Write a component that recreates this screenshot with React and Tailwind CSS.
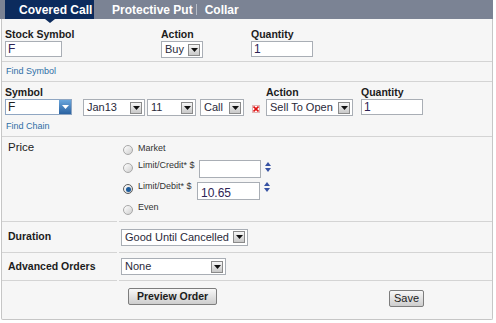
import React from 'react';

const Caret = ({ color = '#111' }) => (
  <svg width="7" height="4" viewBox="0 0 7 4"><path d="M0 0h7L3.5 4z" fill={color} /></svg>
);

const DropBtn = () => (
  <span className="flex items-center justify-center w-[12px] h-[12px] border border-[#8a8a8a] bg-linear-to-b from-[#f7f7f7] to-[#c8c8c8] shrink-0">
    <Caret />
  </span>
);

const Select = ({ value, className }) => (
  <div className={`flex items-center justify-between h-[17px] bg-white border border-[#a9aeb5] pl-[3px] pr-[2px] text-[11px] text-[#2a2a3a] ${className}`}>
    <span className="leading-none">{value}</span>
    <DropBtn />
  </div>
);

const TextBox = ({ value, className }) => (
  <div className={`flex items-center h-[16px] bg-white border border-[#a9aeb5] pl-[2px] text-[12px] leading-none text-[#2e2354] ${className}`}>{value}</div>
);

const Label = ({ children }) => (
  <div className="h-[12px] text-[10.5px] leading-[12px] font-bold text-[#1c1c1c] whitespace-nowrap">{children}</div>
);

const Radio = ({ checked, className }) => (
  <div className={`flex items-center justify-center w-[10px] h-[10px] rounded-full border shrink-0 bg-linear-to-br from-white to-[#d0d0d0] ${checked ? 'border-[#5d5d5d]' : 'border-[#a8a8a8]'} ${className}`}>
    {checked && <span className="w-[5px] h-[5px] rounded-full bg-[#1d5c9c]" />}
  </div>
);

const Spinner = ({ className }) => (
  <div className={`flex ${className}`}>
    <svg width="6" height="10" viewBox="0 0 6 10"><path d="M3 0L6 4H0z M0 6h6L3 10z" fill="#3752a3" /></svg>
  </div>
);

const RadioText = ({ children, className }) => (
  <div className={`ml-[5px] w-[59px] h-[11px] text-[9px] leading-[11px] text-[#333] whitespace-nowrap shrink-0 ${className}`}>{children}</div>
);

export default function App() {
  return (
    <div className="w-[496px] h-[323px] bg-white font-['Liberation_Sans',Arial,sans-serif]">
      <div className="w-[493px]">
        {/* tabs */}
        <div className="flex items-stretch h-[19px] bg-[#7b8394] text-[12px] font-bold text-white">
          <div className="relative ml-[5px] w-[89px] pl-[14px] bg-[#0c2b5d] flex items-center">
            Covered Call
            <span className="absolute left-[40px] top-full w-0 h-0 border-l-[5px] border-r-[5px] border-t-[4px] border-l-transparent border-r-transparent border-t-[#0c2b5d]" />
          </div>
          <div className="ml-[18px] flex items-center">Protective Put</div>
          <div className="ml-[3px] my-[4px] w-px bg-[#b7bdc7]" />
          <div className="ml-[8px] flex items-center">Collar</div>
        </div>

        <div className="ml-[1px] w-[492px] h-[301px] border-l border-r border-b border-[#c6c6c6] bg-[#f6f6f6] rounded-b-[2px] flex flex-col">
          {/* stock row */}
          <div className="flex pl-[3px] pt-[9px] h-[43px] shrink-0 border-b border-[#d4d4d4]">
            <div className="w-[156px] flex flex-col">
              <Label>Stock Symbol</Label>
              <TextBox value="F" className="mt-[1px] w-[57px]" />
            </div>
            <div className="w-[90px] flex flex-col">
              <Label>Action</Label>
              <Select value="Buy" className="mt-[1px] w-[42px]" />
            </div>
            <div className="flex flex-col">
              <Label>Quantity</Label>
              <TextBox value="1" className="mt-[1px] w-[62px]" />
            </div>
          </div>

          <div className="h-[20px] shrink-0 pl-[4px] flex items-center border-b border-[#d4d4d4] text-[9px] text-[#2f6ea6]">Find Symbol</div>

          {/* option row */}
          <div className="h-[55px] shrink-0 pl-[3px] pt-[4px] border-b border-[#d4d4d4]">
            <div className="flex items-start">
              <div className="flex flex-col">
                <Label>Symbol</Label>
                <div className="mt-[1px] flex w-[67px] h-[16px] bg-white border border-[#8fa6c2]">
                  <span className="flex-1 pl-[2px] text-[12px] leading-[14px] text-[#222]">F</span>
                  <span className="flex items-center justify-center w-[12px] h-full bg-linear-to-b from-[#6aa6dc] to-[#2a62a1]">
                    <Caret color="#fff" />
                  </span>
                </div>
              </div>
              <div className="ml-[11px] flex flex-col">
                <div className="h-[12px]" />
                <Select value="Jan13" className="mt-[1px] w-[62px]" />
              </div>
              <div className="ml-[2px] flex flex-col">
                <div className="h-[12px]" />
                <Select value="11" className="mt-[1px] w-[49px]" />
              </div>
              <div className="ml-[4px] flex flex-col">
                <div className="h-[12px]" />
                <Select value="Call" className="mt-[1px] w-[44px]" />
              </div>
              <div className="ml-[8px] mt-[19px] flex items-center justify-center w-[8px] h-[8px] border border-[#e0b4b4] bg-white">
                <svg width="6" height="6" viewBox="0 0 6 6"><path d="M0.5 0.5l5 5M5.5 0.5l-5 5" stroke="#e01010" strokeWidth="1.6" /></svg>
              </div>
              <div className="ml-[6px] flex flex-col">
                <Label>Action</Label>
                <Select value="Sell To Open" className="mt-[1px] w-[87px]" />
              </div>
              <div className="ml-[8px] flex flex-col">
                <Label>Quantity</Label>
                <TextBox value="1" className="mt-[1px] w-[62px]" />
              </div>
            </div>
            <div className="mt-[4px] h-[14px] pl-[1px] flex items-center text-[9px] text-[#2f6ea6]">Find Chain</div>
          </div>

          {/* price */}
          <div className="flex h-[85px] shrink-0">
            <div className="w-[115px] border-b border-[#d4d4d4] pl-[6px] pt-[3px] text-[11.5px] leading-[14px] text-[#1c1c1c]">Price</div>
            <div className="flex-1 ml-[2px] border-b border-[#d4d4d4] pl-[4px] pt-[4px] flex flex-col">
              <div className="flex items-start h-[19px]">
                <Radio className="mt-[4px]" />
                <RadioText className="mt-[2px]">Market</RadioText>
              </div>
              <div className="flex items-start h-[21px]">
                <Radio className="mt-[3px]" />
                <RadioText className="mt-[0px]">Limit/Credit* $</RadioText>
                <div className="ml-[2px] w-[62px] h-[18px] bg-white border border-[#a9aeb5]" />
                <Spinner className="ml-[4px] mt-[2px]" />
              </div>
              <div className="flex items-start h-[21px]">
                <Radio checked className="mt-[3px]" />
                <RadioText className="mt-[0px]">Limit/Debit* $</RadioText>
                <div className="mt-[1px] w-[63px] h-[18px] bg-white border border-[#a9aeb5] pl-[3px] pt-[4px] text-[12px] leading-[12px] text-[#2e2354]">10.65</div>
                <Spinner className="ml-[4px] mt-[1px]" />
              </div>
              <div className="flex items-start h-[19px]">
                <Radio className="mt-[3px]" />
                <RadioText className="mt-[0px]">Even</RadioText>
              </div>
            </div>
          </div>

          {/* duration */}
          <div className="flex h-[31px] shrink-0">
            <div className="w-[115px] border-b border-[#d4d4d4] pl-[6px] flex items-center text-[10.5px] font-bold text-[#1c1c1c]">Duration</div>
            <div className="flex-1 ml-[2px] border-b border-[#d4d4d4] pl-[2px] flex items-center">
              <Select value="Good Until Cancelled" className="w-[127px]" />
            </div>
          </div>

          <div className="flex h-[28px] shrink-0">
            <div className="w-[115px] border-b border-[#d4d4d4] pl-[6px] flex items-center text-[10.5px] font-bold text-[#1c1c1c]">Advanced Orders</div>
            <div className="flex-1 ml-[2px] border-b border-[#d4d4d4] pl-[2px] flex items-center">
              <Select value="None" className="w-[105px]" />
            </div>
          </div>

          {/* buttons */}
          <div className="flex items-start flex-1">
            <button className="ml-[126px] mt-[7px] w-[89px] h-[17px] border border-[#7d7d7d] rounded-[2px] bg-linear-to-b from-[#f8f8f8] to-[#cdcdcd] text-[10.5px] font-bold text-[#1c1c1c] flex items-center justify-center">Preview Order</button>
            <button className="ml-[172px] mt-[9px] w-[35px] h-[17px] border border-[#7d7d7d] rounded-[2px] bg-linear-to-b from-[#f8f8f8] to-[#cdcdcd] text-[11px] text-[#1c1c1c] flex items-center justify-center">Save</button>
          </div>
        </div>
      </div>
    </div>
  );
}
